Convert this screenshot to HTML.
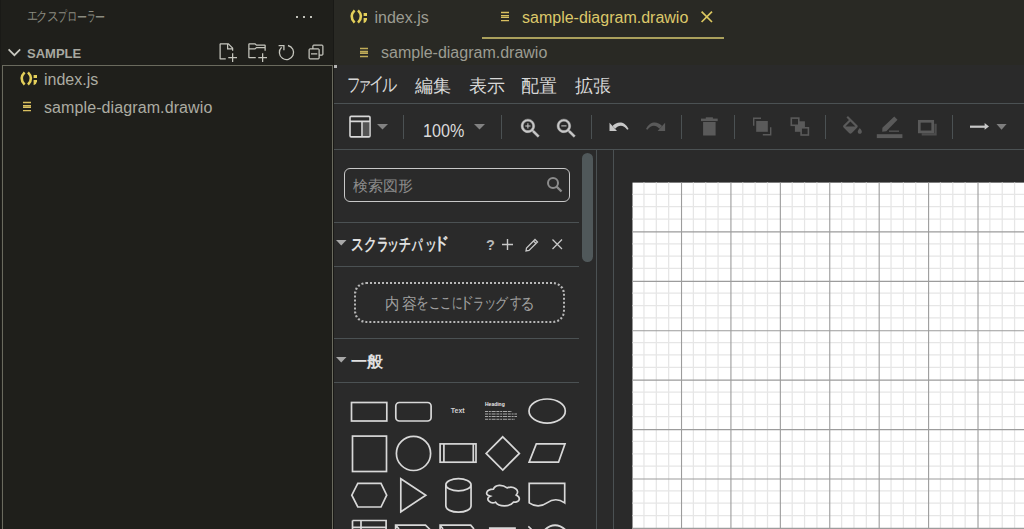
<!DOCTYPE html>
<html lang="ja">
<head>
<meta charset="utf-8">
<style>
*{margin:0;padding:0;box-sizing:border-box}
html,body{width:1024px;height:529px;overflow:hidden;background:#2a2a2a;font-family:"Liberation Sans",sans-serif}
.abs{position:absolute}
svg{position:absolute;overflow:visible}
#side{left:0;top:0;width:333px;height:529px;background:#1f1f1b}
#sideL{left:0;top:0;width:1px;height:529px;background:#1a1a17}
#sideB{left:333px;top:0;width:1px;height:529px;background:#191916}
#tabs{left:334px;top:0;width:690px;height:65px;background:#292924}
#dio{left:334px;top:65px;width:690px;height:464px;background:#2a2a2a}
.t{position:absolute;white-space:nowrap;line-height:1}
.hl{position:absolute;height:1px;background:#4b5153}
.vl{position:absolute;width:1px;background:#4b5153}
.sep{position:absolute;width:1px;top:115px;height:24px;background:#4b5153}
</style>
</head>
<body>
<!-- VS Code sidebar -->
<div id="side" class="abs"></div>
<div id="sideL" class="abs"></div>
<div id="sideB" class="abs"></div>
<div class="t" style="left:26.52px;top:8.25px;font-size:14.0px;transform:scaleX(0.783);transform-origin:0 0;color:#8b8b80">エ</div>
<div class="t" style="left:36.26px;top:8.85px;font-size:14.0px;transform:scaleX(0.820);transform-origin:0 0;color:#8b8b80">ク</div>
<div class="t" style="left:46.95px;top:9.05px;font-size:14.0px;transform:scaleX(0.855);transform-origin:0 0;color:#8b8b80">ス</div>
<div class="t" style="left:57.86px;top:9.25px;font-size:14.0px;transform:scaleX(0.643);transform-origin:0 0;color:#8b8b80">プ</div>
<div class="t" style="left:67.22px;top:9.40px;font-size:14.0px;transform:scaleX(0.740);transform-origin:0 0;color:#8b8b80">ロ</div>
<div class="t" style="left:76.58px;top:9.90px;font-size:14.0px;transform:scaleX(0.717);transform-origin:0 0;color:#8b8b80">ー</div>
<div class="t" style="left:86.97px;top:9.05px;font-size:14.0px;transform:scaleX(0.627);transform-origin:0 0;color:#8b8b80">ラ</div>
<div class="t" style="left:94.68px;top:9.90px;font-size:14.0px;transform:scaleX(0.717);transform-origin:0 0;color:#8b8b80">ー</div>
<div class="abs" style="left:296px;top:16px;width:2px;height:2px;background:#c0c0b8"></div>
<div class="abs" style="left:303px;top:16px;width:2px;height:2px;background:#c0c0b8"></div>
<div class="abs" style="left:310px;top:16px;width:2px;height:2px;background:#c0c0b8"></div>

<svg style="left:0;top:40px" width="40" height="24"><path d="M8.6 9.4 L14.4 15.2 L20.2 9.4" fill="none" stroke="#c8c8c0" stroke-width="1.7"/></svg>
<div class="t" style="left:27px;top:47px;font-size:13px;font-weight:bold;color:#a8a8a0">SAMPLE</div>

<!-- explorer action icons -->
<svg style="left:217px;top:42px" width="20" height="20" viewBox="0 0 16 16"><path fill="#c5c5bd" d="M9.5 1.1l3.4 3.5.1.4v2h-1V6H8V2H3v11h4v1H2.5l-.5-.5v-12l.5-.5h6.7l.3.1zM9 2v3h2.9L9 2zm4 14h-1v-3H9v-1h3V9h1v3h3v1h-3v3z"/></svg>
<svg style="left:247px;top:42px" width="20" height="20" viewBox="0 0 16 16"><path fill="#c5c5bd" d="M14.5 2H7.71l-.85-.85L6.51 1h-5l-.5.5v11l.5.5H7v-1H1.99V6h4.49l.35-.15.86-.86H14v1.5l-.001.51h1.011V2.5L14.5 2zm-.51 2h-6.5l-.35.15-.86.86H2v-3h4.29l.85.85.36.15H14l-.01.99zM13 16h-1v-3H9v-1h3V9h1v3h3v1h-3v3z"/></svg>
<svg style="left:276px;top:42px" width="20" height="20"><path fill="none" stroke="#c5c5bd" stroke-width="1.3" d="M12 3.5 A7.1 7.1 0 1 1 5.6 5.3"/><path fill="none" stroke="#c5c5bd" stroke-width="1.3" d="M2.6 3.7 H7.9 V8.2"/></svg>
<svg style="left:306px;top:42px" width="20" height="20" viewBox="0 0 16 16"><path fill="#c5c5bd" d="M9 9H4v1h5V9z M5 3l1-1h7l1 1v7l-1 1h-2v2l-1 1H3l-1-1V6l1-1h2V3zm1 2h4l1 1v4h2V3H6v2zm4 1H3v7h7V6z"/></svg>

<!-- focus border -->
<div class="abs" style="left:2px;top:65px;width:331px;height:470px;border:1px solid #6a6a5e"></div>

<!-- tree -->
<svg style="left:20px;top:71px" width="18" height="15" viewBox="0 0 18 15"><g fill="none" stroke="#e3cf5a" stroke-width="2.5"><path d="M4.6 1.4 Q-1.4 7.5 4.6 13.6"/><path d="M8 1.4 Q14 7.5 8 13.6"/></g><rect x="13.6" y="4" width="3.4" height="3" fill="#e3cf5a"/><path d="M13.6 9 h3.4 v1.6 Q16.6 13.2 14 14 L13.6 14 z" fill="#e3cf5a"/></svg>
<div class="t" style="left:44px;top:71.8px;font-size:16px;color:#acaca2">index.js</div>
<svg style="left:22px;top:101px" width="10" height="11"><g stroke="#d9c060" stroke-width="1.4"><path d="M1 1.5h8M1 4.6h8M1 6.3h8M1 9.6h8"/></g></svg>
<div class="t" style="left:44px;top:99.7px;font-size:16px;letter-spacing:0.1px;color:#acaca2">sample-diagram.drawio</div>

<!-- tabs -->
<div id="tabs" class="abs"></div>
<svg style="left:350px;top:9.4px" width="18" height="15" viewBox="0 0 18 15"><g fill="none" stroke="#e3cf5a" stroke-width="2.5"><path d="M4.6 1.4 Q-1.4 7.5 4.6 13.6"/><path d="M8 1.4 Q14 7.5 8 13.6"/></g><rect x="13.6" y="4" width="3.4" height="3" fill="#e3cf5a"/><path d="M13.6 9 h3.4 v1.6 Q16.6 13.2 14 14 L13.6 14 z" fill="#e3cf5a"/></svg>
<div class="t" style="left:374.5px;top:10px;font-size:16px;color:#9c9c92">index.js</div>

<svg style="left:500px;top:11px" width="10" height="11"><g stroke="#d9c060" stroke-width="1.3"><path d="M1 1.5h8M1 4.6h8M1 6.3h8M1 9.6h8"/></g></svg>
<div class="t" style="left:522px;top:9.6px;font-size:16px;color:#dcc86a">sample-diagram.drawio</div>
<svg style="left:700px;top:10.3px" width="14" height="14"><path d="M1.6 1.6 L12 12 M12 1.6 L1.6 12" stroke="#dcc860" stroke-width="1.7"/></svg>
<div class="abs" style="left:482px;top:37px;width:242px;height:2px;background:#aaa05c"></div>

<svg style="left:359px;top:47px" width="10" height="11"><g stroke="#c0ac58" stroke-width="1.5"><path d="M1 1.5h8M1 4.6h8M1 6.3h8M1 9.6h8"/></g></svg>
<div class="t" style="left:381px;top:45px;font-size:16px;color:#9c9c92">sample-diagram.drawio</div>

<!-- draw.io -->
<div id="dio" class="abs"></div>
<div class="abs" style="left:334px;top:65px;width:3px;height:3px;background:#b4b4b4"></div>

<div class="t" style="left:346.66px;top:75.25px;font-size:19.0px;transform:scaleX(0.720);transform-origin:0 0;color:#d8d8d8">フ</div>
<div class="t" style="left:357.32px;top:74.80px;font-size:19.0px;transform:scaleX(0.769);transform-origin:0 0;color:#d8d8d8">ァ</div>
<div class="t" style="left:369.07px;top:74.40px;font-size:19.0px;transform:scaleX(0.814);transform-origin:0 0;color:#d8d8d8">イ</div>
<div class="t" style="left:382.21px;top:75.35px;font-size:19.0px;transform:scaleX(0.794);transform-origin:0 0;color:#d8d8d8">ル</div>
<div class="t" style="left:415px;top:77.5px;font-size:17.5px;color:#d8d8d8">編集</div>
<div class="t" style="left:468.5px;top:77.5px;font-size:17.5px;color:#d8d8d8">表示</div>
<div class="t" style="left:521px;top:77.5px;font-size:17.5px;color:#d8d8d8">配置</div>
<div class="t" style="left:575px;top:77.5px;font-size:17.5px;color:#d8d8d8">拡張</div>

<div class="hl" style="left:334px;top:103px;width:690px"></div>
<div class="hl" style="left:334px;top:149px;width:690px"></div>

<!-- toolbar -->
<svg style="left:349px;top:115px" width="22" height="23"><rect x="1" y="1.4" width="20" height="20.5" rx="1.2" fill="none" stroke="#d8d8d8" stroke-width="1.6"/><rect x="13.6" y="7" width="6.6" height="14" fill="#545454"/><path d="M1 6.4h20M13 6.4v15.5" stroke="#d8d8d8" stroke-width="1.6"/></svg>
<svg style="left:377px;top:124px" width="11" height="6"><path d="M0 0h11L5.5 5.6z" fill="#828282"/></svg>
<div class="sep" style="left:403px"></div>
<div class="t" style="left:422.5px;top:120.5px;font-size:19px;transform:scaleX(0.85);transform-origin:0 0;color:#dcdcdc">100%</div>
<svg style="left:474px;top:124px" width="11" height="6"><path d="M0 0h11L5.5 5.6z" fill="#828282"/></svg>
<div class="sep" style="left:501px"></div>
<svg style="left:518px;top:115.6px" width="25" height="25" viewBox="0 0 24 24"><path fill="#c8c8c8" stroke="#c8c8c8" stroke-width="0.4" d="M15.5 14h-.79l-.28-.27C15.41 12.59 16 11.11 16 9.5 16 5.91 13.09 3 9.5 3S3 5.91 3 9.5 5.91 16 9.5 16c1.61 0 3.09-.59 4.23-1.57l.27.28v.79l5 4.99L20.49 19l-4.99-5zm-6 0C7.01 14 5 11.99 5 9.5S7.01 5 9.5 5 14 7.01 14 9.5 11.99 14 9.5 14z"/><path fill="#c8c8c8" d="M10 7H9v2H7v1h2v2h1v-2h2V9h-2z"/></svg>
<svg style="left:554px;top:115.6px" width="25" height="25" viewBox="0 0 24 24"><path fill="#c8c8c8" stroke="#c8c8c8" stroke-width="0.4" d="M15.5 14h-.79l-.28-.27C15.41 12.59 16 11.11 16 9.5 16 5.91 13.09 3 9.5 3S3 5.91 3 9.5 5.91 16 9.5 16c1.61 0 3.09-.59 4.23-1.57l.27.28v.79l5 4.99L20.49 19l-4.99-5zm-6 0C7.01 14 5 11.99 5 9.5S7.01 5 9.5 5 14 7.01 14 9.5 11.99 14 9.5 14z"/><path fill="#c8c8c8" d="M7 9h5v1H7z"/></svg>
<div class="sep" style="left:591px"></div>
<svg style="left:602px;top:112px" width="32" height="28"><path fill="#c8c8c8" d="M7.5 10.8 L7.5 19 L15 19 Z"/><path fill="#c8c8c8" d="M10.5 14 C15 9.2 22.5 8.6 26.6 17 L25.2 17.8 C21.5 12.3 16.5 12.6 13.2 16.8 Z"/></svg>
<svg style="left:640px;top:112px" width="32" height="28"><g transform="translate(32.6 0) scale(-1 1)"><path fill="#5a5a5a" d="M7.5 10.8 L7.5 19 L15 19 Z"/><path fill="#5a5a5a" d="M10.5 14 C15 9.2 22.5 8.6 26.6 17 L25.2 17.8 C21.5 12.3 16.5 12.6 13.2 16.8 Z"/></g></svg>
<div class="sep" style="left:681px"></div>
<svg style="left:696px;top:112px" width="28" height="28"><g fill="#5a5a5a"><rect x="9.8" y="5.3" width="7.1" height="1.8"/><rect x="5" y="6.6" width="16.7" height="2.5"/><rect x="7.1" y="10" width="12.5" height="13.5"/></g></svg>
<div class="sep" style="left:734px"></div>
<svg style="left:748px;top:112px" width="28" height="28"><rect x="8.2" y="9" width="11.6" height="10.8" fill="#5a5a5a"/><path fill="none" stroke="#5a5a5a" stroke-width="1.4" d="M5.7 13.8V6.3H13M22.7 15.3V22.7H14.8"/></svg>
<svg style="left:786px;top:112px" width="28" height="28"><rect x="8.9" y="9.3" width="10" height="10.5" fill="#5a5a5a"/><rect x="5.3" y="6.1" width="7.5" height="7.2" fill="#2a2a2a" stroke="#5a5a5a" stroke-width="1.6"/><rect x="15.1" y="15.8" width="7.3" height="7.2" fill="#2a2a2a" stroke="#5a5a5a" stroke-width="1.6"/></svg>
<div class="sep" style="left:825px"></div>
<svg style="left:839.6px;top:115.5px" width="25" height="25" viewBox="0 0 24 24"><path fill="#5a5a5a" d="M16.56 8.94L7.62 0 6.21 1.41l2.38 2.38-5.15 5.15c-.59.59-.59 1.54 0 2.12l5.5 5.5c.29.29.68.44 1.06.44s.77-.15 1.06-.44l5.5-5.5c.59-.58.59-1.53 0-2.12zM5.21 10L10 5.21 14.79 10H5.21zM19 11.5s-2 2.17-2 3.5c0 1.1.9 2 2 2s2-.9 2-2c0-1.33-2-3.5-2-3.5z"/></svg>
<svg style="left:874px;top:110px" width="32" height="32"><path fill="#5a5a5a" d="M20.3 6.6 L23.5 9.8 L12.3 21.3 L8.2 21.8 L8.4 17.8 Z"/><rect x="15" y="20.4" width="10" height="1.6" fill="#4e4e4e"/><rect x="2.8" y="24.2" width="25.6" height="3.9" fill="#5a5a5a"/></svg>
<svg style="left:912px;top:112px" width="32" height="32"><path d="M9.7 21.2h15v2.3h-15z M22.4 11.8h2.3v11.7h-2.3z" fill="#4c4c4c"/><rect x="7.3" y="9.3" width="13.4" height="10.6" fill="none" stroke="#5a5a5a" stroke-width="2.7"/></svg>
<div class="sep" style="left:952px"></div>
<svg style="left:964px;top:112px" width="48" height="28"><path d="M6 14.7h16" stroke="#c8c8c8" stroke-width="2.2"/><path d="M20.6 11.1 L25 14.4 L20.6 17.7z" fill="#c8c8c8"/><path d="M32.5 11.9h10.1L37.55 17.7z" fill="#7e7e7e"/></svg>

<!-- left palette -->
<div class="abs" style="left:344px;top:168px;width:226px;height:34px;border:1.5px solid #c8c8c8;border-radius:6px"></div>
<div class="t" style="left:353px;top:178px;font-size:15px;color:#8c8c8c">検索図形</div>
<svg style="left:546px;top:176px" width="18" height="18" viewBox="0 0 18 18"><circle cx="7" cy="7" r="5" fill="none" stroke="#8c8c8c" stroke-width="2"/><path d="M10.5 10.5 L15.5 15.5" stroke="#8c8c8c" stroke-width="2.4"/></svg>
<div class="hl" style="left:334px;top:222px;width:245px"></div>
<svg style="left:336px;top:240px" width="11" height="7"><path d="M0 0h10.5L5.25 5.5z" fill="#a8a8a8"/></svg>
<div class="t" style="left:351.15px;top:236.20px;font-size:16.5px;font-weight:bold;transform:scaleX(0.753);transform-origin:0 0;color:#e0e0e0">ス</div>
<div class="t" style="left:364.04px;top:235.70px;font-size:16.5px;font-weight:bold;transform:scaleX(0.757);transform-origin:0 0;color:#e0e0e0">ク</div>
<div class="t" style="left:376.81px;top:236.40px;font-size:16.5px;font-weight:bold;transform:scaleX(0.686);transform-origin:0 0;color:#e0e0e0">ラ</div>
<div class="t" style="left:387.18px;top:235.95px;font-size:16.5px;font-weight:bold;transform:scaleX(0.708);transform-origin:0 0;color:#e0e0e0">ッ</div>
<div class="t" style="left:398.80px;top:236.45px;font-size:16.5px;font-weight:bold;transform:scaleX(0.700);transform-origin:0 0;color:#e0e0e0">チ</div>
<div class="t" style="left:412.12px;top:237.20px;font-size:16.5px;font-weight:bold;transform:scaleX(0.616);transform-origin:0 0;color:#e0e0e0">パ</div>
<div class="t" style="left:424.80px;top:235.95px;font-size:16.5px;font-weight:bold;transform:scaleX(0.700);transform-origin:0 0;color:#e0e0e0">ッ</div>
<div class="t" style="left:432.60px;top:235.45px;font-size:16.5px;font-weight:bold;transform:scaleX(0.960);transform-origin:0 0;color:#e0e0e0">ド</div>
<div class="t" style="left:486px;top:238px;font-size:14.5px;font-weight:bold;color:#b8b8b8">?</div>
<svg style="left:502px;top:239px" width="11" height="11"><path d="M5.5 0v11M0 5.5h11" stroke="#c8c8c8" stroke-width="1.4"/></svg>
<svg style="left:525px;top:238px" width="14" height="14" viewBox="0 0 14 14"><path fill="none" stroke="#c8c8c8" stroke-width="1.3" d="M1 13 L1.5 10 L10 1.5 L12.5 4 L4 12.5 Z M8.5 3 L11 5.5"/></svg>
<svg style="left:552px;top:239px" width="11" height="11"><path d="M0.5 0.5 L10 10 M10 0.5 L0.5 10" stroke="#c8c8c8" stroke-width="1.3"/></svg>
<div class="hl" style="left:334px;top:266px;width:245px"></div>
<div class="abs" style="left:354px;top:282px;width:211px;height:41px;border:2px dotted #b8b8b8;border-radius:12px"></div>
<div class="t" style="left:385.41px;top:296.23px;font-size:16.0px;transform:scaleX(0.893);transform-origin:0 0;color:#a0a0a0">内</div>
<div class="t" style="left:401.50px;top:296.02px;font-size:16.0px;transform:scaleX(0.940);transform-origin:0 0;color:#a0a0a0">容</div>
<div class="t" style="left:416.33px;top:295.23px;font-size:16.0px;transform:scaleX(0.785);transform-origin:0 0;color:#a0a0a0">を</div>
<div class="t" style="left:428.96px;top:294.75px;font-size:16.0px;transform:scaleX(0.718);transform-origin:0 0;color:#a0a0a0">こ</div>
<div class="t" style="left:439.58px;top:294.75px;font-size:16.0px;transform:scaleX(0.709);transform-origin:0 0;color:#a0a0a0">こ</div>
<div class="t" style="left:451.64px;top:295.25px;font-size:16.0px;transform:scaleX(0.657);transform-origin:0 0;color:#a0a0a0">に</div>
<div class="t" style="left:459.42px;top:295.32px;font-size:16.0px;transform:scaleX(0.956);transform-origin:0 0;color:#a0a0a0">ド</div>
<div class="t" style="left:473.38px;top:295.88px;font-size:16.0px;transform:scaleX(0.688);transform-origin:0 0;color:#a0a0a0">ラ</div>
<div class="t" style="left:484.42px;top:295.27px;font-size:16.0px;transform:scaleX(0.791);transform-origin:0 0;color:#a0a0a0">ッ</div>
<div class="t" style="left:494.97px;top:295.82px;font-size:16.0px;transform:scaleX(0.814);transform-origin:0 0;color:#a0a0a0">グ</div>
<div class="t" style="left:509.90px;top:295.38px;font-size:16.0px;transform:scaleX(0.727);transform-origin:0 0;color:#a0a0a0">す</div>
<div class="t" style="left:520.17px;top:295.50px;font-size:16.0px;transform:scaleX(0.917);transform-origin:0 0;color:#a0a0a0">る</div>
<div class="hl" style="left:334px;top:338px;width:245px"></div>
<svg style="left:336px;top:357px" width="11" height="7"><path d="M0 0h10.5L5.25 5.5z" fill="#a8a8a8"/></svg>
<div class="t" style="left:351px;top:354px;font-size:16px;font-weight:bold;color:#e0e0e0">一般</div>
<div class="hl" style="left:334px;top:382px;width:245px"></div>

<!-- shapes -->
<svg style="left:334px;top:383px" width="245" height="146"><g fill="none" stroke="#d8d8d8" stroke-width="1.7">
<rect x="17.5" y="19.5" width="35.3" height="18.5"/>
<rect x="61.8" y="19.5" width="35.3" height="18.5" rx="3.6"/>
<ellipse cx="213.15" cy="28.05" rx="18.15" ry="12.05"/>
<rect x="18.5" y="53.1" width="34" height="35.4"/>
<circle cx="79.5" cy="70.4" r="17.1"/>
<rect x="106.1" y="60.9" width="35.9" height="18.3"/><path d="M109.9 60.9v18.3M139.3 60.9v18.3"/>
<path d="M168.75 53.8 L185.35 70.4 L168.75 87 L152.15 70.4 Z"/>
<path d="M202.3 60.9 H231 L224.5 79.2 H195.1 Z"/>
<path d="M23.8 100.4 H47 L52.7 112.2 L47 124 H23.8 L17.8 112.2 Z"/>
<path d="M66.8 95.8 L91.8 112.3 L66.8 128.8 Z"/>
<path d="M111.85 101.75 A12.6 6.1 0 0 1 137.05 101.75 V123.05 A12.6 6.1 0 0 1 111.85 123.05 Z M111.85 101.75 A12.6 6.1 0 0 0 137.05 101.75"/>
<path d="M159.4 106.1 C152.1 106.1 150.3 112.0 156.1 113.2 C150.3 115.9 156.9 121.6 161.6 119.2 C164.9 124.0 175.8 124.0 179.4 119.2 C186.7 119.2 186.7 114.4 182.2 112.0 C186.7 107.3 179.4 102.5 173.1 104.9 C168.5 101.3 161.2 101.3 159.4 106.1 Z"/>
<path d="M195.2 100.3 H230.7 V119.85 Q221.8 113.64 212.95 119.85 Q204.1 126.06 195.2 119.85 Z"/>
<path d="M18.5 137.5 H52.1 V147 M18.5 137.5 V147 M27 137.5 V147 M18.5 144.4 H52.1"/>
<path d="M61.6 147 V142.1 H91.5 L96 146.5 M61.6 142.1 L65 146"/>
<path d="M106.1 147 V142.2 H136.7 L140 146 M106.1 142.2 L109 146"/>
<path d="M155.8 147 V145.1 H181 V147"/>
<path d="M194.3 143.4 L198.2 147 M210.6 147 Q221 137.5 231.6 147"/>
</g>
<text x="116.8" y="30" font-size="7" font-weight="bold" fill="#d0d0d0" font-family="Liberation Sans">Text</text>
<text x="151" y="23" font-size="5" font-weight="bold" fill="#e8e8e8" font-family="Liberation Sans">Heading</text>
<g stroke="#a8a8a8" stroke-width="1.1" stroke-dasharray="3 0.8 2 0.8 4 0.8"><path d="M151 28.5h27M151 31h32M151 33.5h32M151 36.2h30"/></g>
</svg>

<div class="abs" style="left:582px;top:153px;width:11px;height:109px;border-radius:5.5px;background:#50585a"></div>
<div class="vl" style="left:596px;top:150px;height:379px"></div>
<div class="vl" style="left:613px;top:150px;height:379px"></div>

<!-- canvas -->
<svg style="left:0;top:0" width="1024" height="529">
<rect x="632.5" y="182.6" width="391.5" height="346.4" fill="#fff"/>
<path fill="#e6e6e6" d="M643.33 182.60h1.25V529h-1.25zM655.68 182.60h1.25V529h-1.25zM668.04 182.60h1.25V529h-1.25zM692.75 182.60h1.25V529h-1.25zM705.10 182.60h1.25V529h-1.25zM717.45 182.60h1.25V529h-1.25zM742.16 182.60h1.25V529h-1.25zM754.51 182.60h1.25V529h-1.25zM766.87 182.60h1.25V529h-1.25zM791.58 182.60h1.25V529h-1.25zM803.93 182.60h1.25V529h-1.25zM816.29 182.60h1.25V529h-1.25zM840.99 182.60h1.25V529h-1.25zM853.35 182.60h1.25V529h-1.25zM865.70 182.60h1.25V529h-1.25zM890.41 182.60h1.25V529h-1.25zM902.76 182.60h1.25V529h-1.25zM915.12 182.60h1.25V529h-1.25zM939.83 182.60h1.25V529h-1.25zM952.18 182.60h1.25V529h-1.25zM964.53 182.60h1.25V529h-1.25zM989.24 182.60h1.25V529h-1.25zM1001.60 182.60h1.25V529h-1.25zM1013.95 182.60h1.25V529h-1.25zM632.50 193.73H1024v1.25H632.50zM632.50 206.08H1024v1.25H632.50zM632.50 218.44H1024v1.25H632.50zM632.50 243.14H1024v1.25H632.50zM632.50 255.50H1024v1.25H632.50zM632.50 267.85H1024v1.25H632.50zM632.50 292.56H1024v1.25H632.50zM632.50 304.91H1024v1.25H632.50zM632.50 317.27H1024v1.25H632.50zM632.50 341.98H1024v1.25H632.50zM632.50 354.33H1024v1.25H632.50zM632.50 366.69H1024v1.25H632.50zM632.50 391.39H1024v1.25H632.50zM632.50 403.75H1024v1.25H632.50zM632.50 416.10H1024v1.25H632.50zM632.50 440.81H1024v1.25H632.50zM632.50 453.16H1024v1.25H632.50zM632.50 465.52H1024v1.25H632.50zM632.50 490.22H1024v1.25H632.50zM632.50 502.58H1024v1.25H632.50zM632.50 514.93H1024v1.25H632.50z"/>
<path fill="#9c9c9c" d="M680.97 182.60h1.10V529h-1.10zM730.38 182.60h1.10V529h-1.10zM779.80 182.60h1.10V529h-1.10zM829.21 182.60h1.10V529h-1.10zM878.63 182.60h1.10V529h-1.10zM928.05 182.60h1.10V529h-1.10zM977.46 182.60h1.10V529h-1.10zM632.50 231.37H1024v1.10H632.50zM632.50 280.78H1024v1.10H632.50zM632.50 330.20H1024v1.10H632.50zM632.50 379.61H1024v1.10H632.50zM632.50 429.03H1024v1.10H632.50zM632.50 478.45H1024v1.10H632.50zM632.50 527.86H1024v1.10H632.50z"/>
</svg>

</body>
</html>
